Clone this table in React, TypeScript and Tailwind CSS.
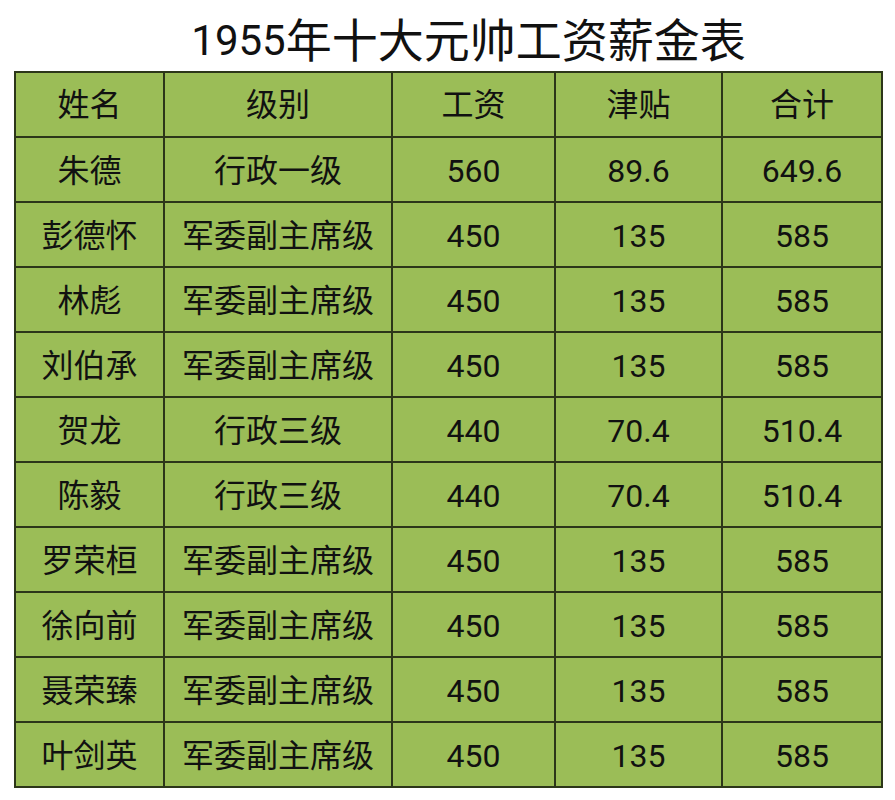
const headers = ["姓名", "级别", "工资", "津贴", "合计"];

const rows: string[][] = [
  ["朱德", "行政一级", "560", "89.6", "649.6"],
  ["彭德怀", "军委副主席级", "450", "135", "585"],
  ["林彪", "军委副主席级", "450", "135", "585"],
  ["刘伯承", "军委副主席级", "450", "135", "585"],
  ["贺龙", "行政三级", "440", "70.4", "510.4"],
  ["陈毅", "行政三级", "440", "70.4", "510.4"],
  ["罗荣桓", "军委副主席级", "450", "135", "585"],
  ["徐向前", "军委副主席级", "450", "135", "585"],
  ["聂荣臻", "军委副主席级", "450", "135", "585"],
  ["叶剑英", "军委副主席级", "450", "135", "585"],
];

const colWidths = ["w-[149px]", "w-[228px]", "w-[163px]", "w-[167px]", "w-[160px]"];

export default function App() {
  return (
    <div
      className="w-[895px] h-[800px] bg-white text-[#111] overflow-hidden"
      style={{ fontFamily: "Roboto, 'Noto Sans CJK SC', sans-serif" }}
    >
      <h1 className="h-[71px] flex items-center justify-center pl-[42px] pt-[10px] font-normal leading-none">
        <span className="text-[42px]">1955</span>
        <span className="text-[46px]">年十大元帅工资薪金表</span>
      </h1>
      <div className="pl-[14px]">
        <table className="table-fixed border-collapse bg-[#9bbd57] text-[32px] leading-none">
          <thead>
            <tr className="h-[65px]">
              {headers.map((h, i) => (
                <th
                  key={h}
                  className={`${colWidths[i]} border-2 border-[#2c3619] font-normal text-center align-middle`}
                >
                  {h}
                </th>
              ))}
            </tr>
          </thead>
          <tbody>
            {rows.map((r) => (
              <tr key={r[0]} className="h-[65px]">
                {r.map((c, i) => (
                  <td key={i} className="border-2 border-[#2c3619] text-center align-middle pt-[3px]">
                    {c}
                  </td>
                ))}
              </tr>
            ))}
          </tbody>
        </table>
      </div>
    </div>
  );
}
